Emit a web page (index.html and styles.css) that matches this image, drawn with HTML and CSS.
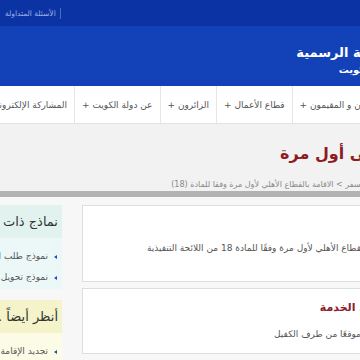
FILE: index.html
```html
<!DOCTYPE html>
<html lang="ar">
<head>
<meta charset="utf-8">
<title>البوابة الإلكترونية الرسمية لدولة الكويت</title>
<link rel="stylesheet" href="styles.css">
</head>
<body>
<div class="page" dir="rtl">
  <div class="topbar">
    <a class="toplink">الأسئلة المتداولة</a>
  </div>
  <header class="header">
    <div class="brand">
      <div class="site-title">البوابة الإلكترونية الرسمية</div>
      <div class="site-sub">لدولة الكويت</div>
    </div>
  </header>
  <nav class="nav">
    <a class="nav-item">المواطنون و المقيمون +</a>
    <a class="nav-item">قطاع الأعمال +</a>
    <a class="nav-item">الزائرون +</a>
    <a class="nav-item">عن دولة الكويت +</a>
    <a class="nav-item">المشاركة الإلكترونية +</a>
  </nav>
  <section class="intro">
    <h1 class="page-title">الإقامة بالقطاع الأهلي على أول مرة</h1>
    <div class="crumbs">الرئيسية &gt; المواطنون و المقيمون &gt; الهجرة والسفر &gt; الاقامة بالقطاع الأهلي لأول مرة وفقا للمادة (18)</div>
  </section>
  <div class="shadowbar"></div>
  <div class="content">
    <main class="main">
      <div class="card card-one">
        <p class="card-text">الحصول على إقامة للعاملين بالقطاع الأهلي لأول مرة وفقًا للمادة 18 من اللائحة التنفيذية</p>
      </div>
      <div class="card card-two">
        <h2 class="card-head">إجراءات الحصول على الخدمة</h2>
        <p class="card-text">نسخة من استمارة طلب إقامة موقعًا من طرف الكفيل</p>
      </div>
    </main>
    <aside class="side">
      <div class="box box-related">
        <div class="box-head">نماذج ذات صلة</div>
        <ul class="box-list">
          <li>نموذج طلب الإقامة</li>
          <li>نموذج تحويل الإقامة</li>
        </ul>
      </div>
      <div class="box box-see">
        <div class="box-head">أنظر أيضاً ..</div>
        <ul class="box-list">
          <li>تجديد الإقامة</li>
        </ul>
      </div>
    </aside>
  </div>
</div>
</body>
</html>
```

FILE: styles.css
```css
html, body {
  margin: 0;
  padding: 0;
  overflow: hidden;
  background: #f7f7f7;
}
.page {
  width: 800px;
  margin-left: -170px;
  direction: rtl;
  font-family: "DejaVu Sans", sans-serif;
}
.topbar {
  height: 26px;
  background: #0b33a3;
  display: flex;
  align-items: center;
  justify-content: flex-end;
  padding-left: 175px;
}
.toplink {
  font-size: 7.5px;
  color: #9fb2e6;
  padding-right: 4px;
  border-right: 1px solid #4a6cc6;
  line-height: 11px;
}
.header {
  height: 60px;
  box-sizing: border-box;
  background: #1342b8;
  padding: 18px 150px 0 0;
  color: #fff;
}
.brand {
  width: 200px;
  text-align: center;
}
.site-title {
  font-size: 13px;
  font-weight: bold;
  line-height: 18px;
}
.site-sub {
  font-size: 10px;
  font-weight: bold;
  line-height: 14px;
  margin-top: 1px;
  padding-right: 20px;
}
.nav {
  height: 37px;
  background: #fff;
  border-bottom: 1px solid #e2e2e2;
  display: flex;
  padding-right: 230px;
  white-space: nowrap;
}
.nav-item {
  display: flex;
  align-items: center;
  padding: 0 7px;
  font-size: 9px;
  color: #555;
  border-left: 1px solid #e6e6e6;
}
.intro {
  height: 67px;
  background: #f2f2f2;
  padding-right: 63px;
  overflow: hidden;
}
.page-title {
  margin: 19px 0 0;
  font-size: 16px;
  line-height: 22px;
  color: #8c1c22;
  font-weight: bold;
  white-space: nowrap;
}
.crumbs {
  margin: 14px 48px 0 0;
  font-size: 8px;
  line-height: 11px;
  color: #888;
  white-space: nowrap;
}
.shadowbar {
  height: 6px;
  background: #b3b3b3;
}
.content {
  display: grid;
  grid-template-columns: 1fr 220px;
  column-gap: 20px;
  padding: 8px 139px 0 12px;
}
.main {
  display: flex;
  flex-direction: column;
  gap: 6px;
}
.card {
  background: #fff;
  border: 1px solid #dedede;
}
.card-one {
  height: 77px;
  box-sizing: border-box;
  padding: 36px 14px 0;
}
.card-two {
  height: 66px;
  box-sizing: border-box;
  padding: 12px 14px 0;
}
.card-text {
  margin: 0;
  font-size: 9px;
  line-height: 12px;
  color: #555;
  white-space: nowrap;
}
.card-head {
  margin: 0 0 14px;
  font-size: 11px;
  line-height: 13px;
  color: #8c1c2c;
  font-weight: bold;
  white-space: nowrap;
}
.side {
  display: flex;
  flex-direction: column;
  gap: 11px;
  overflow: hidden;
}
.box-head {
  font-size: 13px;
  line-height: 33px;
  height: 33px;
  padding-right: 4px;
  color: #333;
  white-space: nowrap;
}
.box-list {
  margin: 0;
  padding: 8px 4px 4px 0;
  list-style: none;
}
.box-list li {
  position: relative;
  padding-right: 10px;
  font-size: 9px;
  line-height: 21px;
  color: #555;
  white-space: nowrap;
}
.box-list li::before {
  content: "";
  position: absolute;
  right: 1px;
  top: 9px;
  border-right: 3px solid #1c4fb8;
  border-top: 2px solid transparent;
  border-bottom: 2px solid transparent;
}
.box-related .box-head { background: #e2f3ef; }
.box-related .box-list { background: #ecf8f8; height: 39px; }
.box-see .box-head { background: #f4f3c9; }
.box-see .box-list { background: #fcfce6; }
```
